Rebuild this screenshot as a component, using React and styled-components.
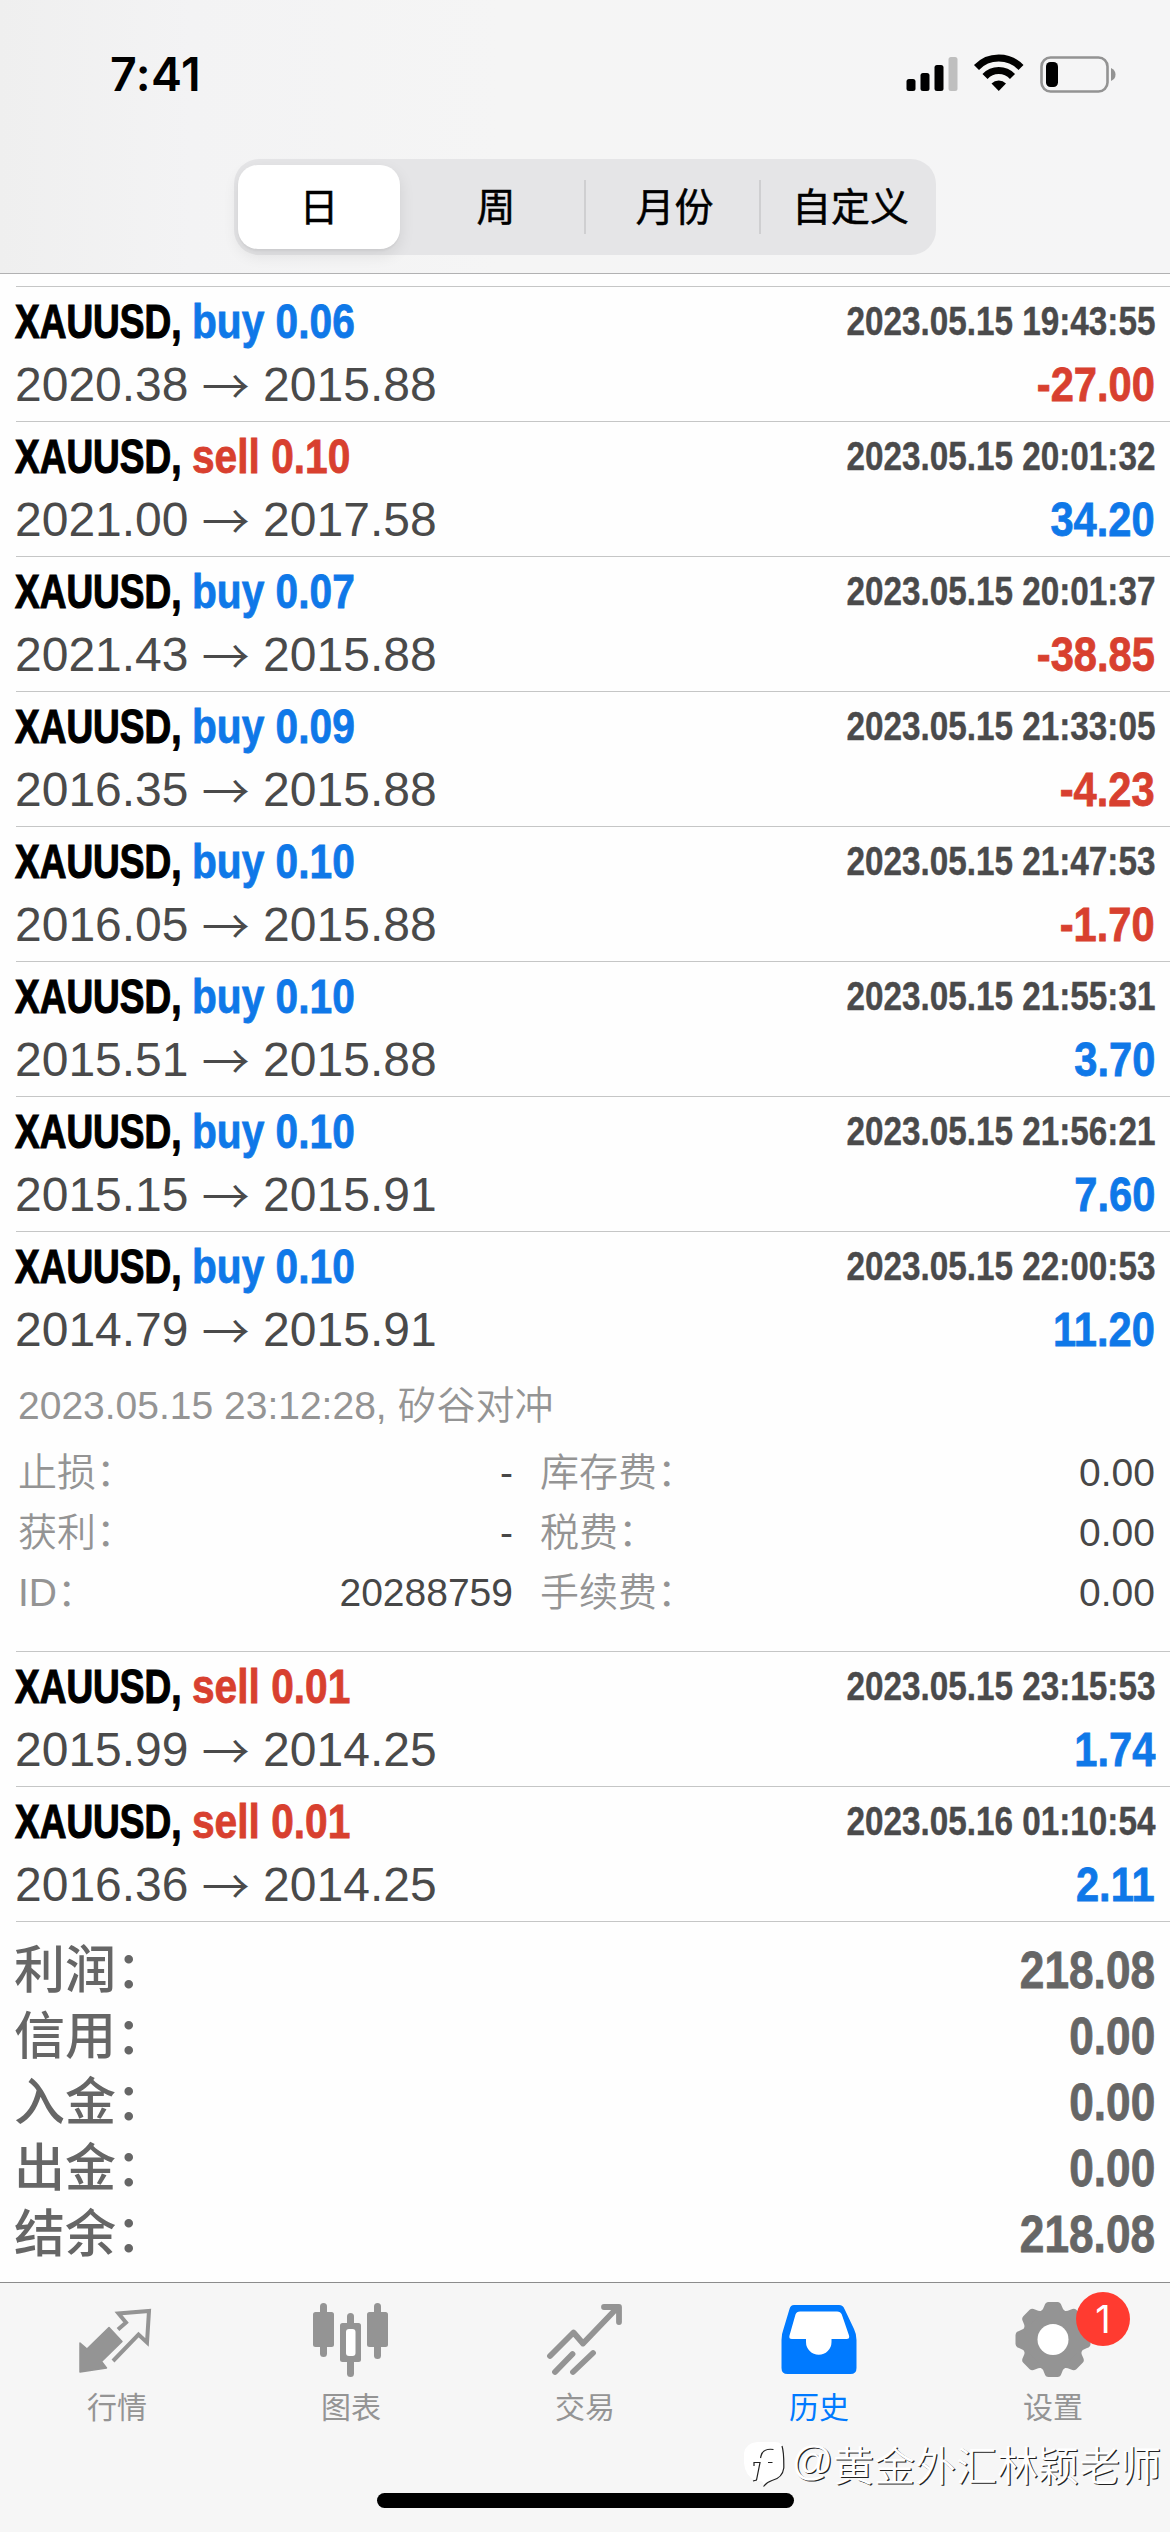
import React from "react";
import styled, { createGlobalStyle } from "styled-components";

const BLUE = "#0f78e8";
const RED = "#d8402f";

const GlobalStyle = createGlobalStyle`
  * { box-sizing: border-box; }
  html, body { margin: 0; padding: 0; background: #fff; }
  body { font-family: "Liberation Sans", "Noto Sans CJK SC", sans-serif; }
`;

const Screen = styled.div`
  position: relative;
  width: 1170px;
  height: 2532px;
  display: flex;
  flex-direction: column;
  overflow: hidden;
  background: #fefefe;
`;

const Header = styled.header`
  height: 274px;
  display: flex;
  flex-direction: column;
  align-items: center;
  background: linear-gradient(90deg, #efefef 0, #f3f3f4 190px, #f5f5f5 500px, #f5f5f6 100%);
  border-bottom: 1px solid #b1b1b2;
`;

const StatusBar = styled.div`
  width: 100%;
  height: 159px;
  padding: 46px 54px 0 110px;
  display: flex;
  justify-content: space-between;
  align-items: flex-start;
`;

const Clock = styled.span`
  font: 600 46.5px/56px Inter, sans-serif;
  letter-spacing: 0.5px;
  color: #000;
`;

const StatusIcons = styled.svg`
  width: 212px;
  height: 44px;
  margin-top: 6px;
`;

const Segments = styled.nav`
  width: 702px;
  height: 96px;
  display: grid;
  grid-template-columns: 170px 182px 175px 175px;
  align-items: center;
  background: #e5e5e7;
  border-radius: 25px;
`;

const Segment = styled.button`
  height: ${(p) => (p.$active ? "84px" : "54px")};
  margin: ${(p) => (p.$active ? "0 4px" : "0")};
  padding: ${(p) => (p.$active ? "0 0 5px" : "0 0 5px 4px")};
  border: 0;
  border-right: ${(p) => (p.$divided ? "2px solid #cfcfd1" : "0")};
  border-radius: ${(p) => (p.$active ? "20px" : "0")};
  background: ${(p) => (p.$active ? "#fff" : "transparent")};
  box-shadow: ${(p) => (p.$active ? "0 6px 16px rgba(0,0,0,.09), 0 2px 2px rgba(0,0,0,.04)" : "none")};
  font: 400 39px/49px "Noto Sans CJK SC", sans-serif;
  -webkit-text-stroke: 0.5px #000;
  color: #000;
`;

const List = styled.main`
  flex: 1;
  padding: 12px 0 0 16px;
`;

const Deal = styled.article`
  height: ${(p) => (p.$open ? "420px" : "135px")};
  padding: 4px 15px 0 0;
  border-top: 1px solid #c5c6c6;
`;

const Line = styled.div`
  height: ${(p) => p.$h}px;
  margin-left: -1px;
  display: flex;
  align-items: center;
  justify-content: space-between;
  white-space: nowrap;
`;

const Title = styled.div`
  display: flex;
  font-weight: 700;
  font-size: 49px;
  line-height: 60px;
`;

const Symbol = styled.span`
  width: 177px;
  color: #000;
  transform: scaleX(0.755);
  transform-origin: left;
  -webkit-text-stroke: 1.2px #000;
`;

const Side = styled.span`
  color: ${(p) => (p.$sell ? RED : BLUE)};
  transform: scaleX(0.83);
  transform-origin: left;
  -webkit-text-stroke: 0.8px currentColor;
`;

const Time = styled.time`
  padding-bottom: 1px;
  font-weight: 700;
  font-size: 40px;
  line-height: 58px;
  color: #4a4a4b;
  transform: scaleX(0.832);
  transform-origin: right;
  -webkit-text-stroke: 0.4px currentColor;
`;

const Prices = styled.span`
  padding-top: 1px;
  display: flex;
  font-size: 48px;
  line-height: 66px;
  color: #4a4a4a;
`;

const Arrow = styled.span`
  width: 48px;
  height: 60px;
  margin: 0 13.3px;
  font-family: "Noto Sans CJK SC", sans-serif;
  font-weight: 350;
  line-height: 62px;
`;

const Profit = styled.strong`
  font-weight: 700;
  font-size: 49px;
  line-height: 66px;
  color: ${(p) => (p.$loss ? RED : BLUE)};
  transform: scaleX(0.85);
  transform-origin: right;
  -webkit-text-stroke: 0.8px currentColor;
`;

const Details = styled.div`
  padding: 14px 0 0 2px;
  font-size: 39px;
  line-height: 60px;
  font-weight: 350;
  color: #949494;
`;

const Note = styled.p`
  margin: 0 0 7px;
`;

const DetailGrid = styled.dl`
  margin: 0;
  display: grid;
  grid-template-columns: 495px 615px;
  column-gap: 27px;
`;

const Detail = styled.div`
  display: flex;
  justify-content: space-between;
`;

const Term = styled.dt``;

const Value = styled.dd`
  margin: 0;
  color: #474747;
`;

const Summary = styled.section`
  padding: 15px 15px 0 0;
  border-top: 1px solid #c5c6c6;
`;

const SummaryLabel = styled.span`
  margin: 2px 0 0 -1px;
  font-size: 51px;
  line-height: 66px;
  font-weight: 500;
  color: #666;
`;

const SummaryValue = styled.span`
  font-size: 52px;
  line-height: 66px;
  font-weight: 700;
  color: #666;
  transform: scaleX(0.85);
  transform-origin: right;
  -webkit-text-stroke: 0.8px currentColor;
`;

const Footer = styled.footer`
  height: 250px;
  display: flex;
  flex-direction: column;
  align-items: center;
  justify-content: space-between;
  background: #f6f6f6;
  border-top: 1px solid #8c8c8c;
`;

const Tabs = styled.nav`
  width: 100%;
  display: grid;
  grid-template-columns: repeat(5, 1fr);
`;

const Tab = styled.a`
  position: relative;
  display: flex;
  flex-direction: column;
  align-items: center;
  padding-top: 15px;
  color: ${(p) => (p.$active ? "#007aff" : "#949494")};
`;

const TabIcon = styled.svg`
  width: 90px;
  height: 84px;
`;

const TabLabel = styled.span`
  margin-top: 1px;
  font: 400 30px/44px "Noto Sans CJK SC", sans-serif;
`;

const Badge = styled.span`
  position: absolute;
  top: 9px;
  left: 140px;
  width: 54px;
  height: 54px;
  border-radius: 50%;
  background: #ff3b30;
  color: #fff;
  text-align: center;
  font: 400 38px/54px Inter, sans-serif;
`;

const HomeIndicator = styled.div`
  width: 417px;
  height: 15px;
  margin-bottom: 24px;
  border-radius: 8px;
  background: #000;
`;

const Watermark = styled.div`
  position: absolute;
  right: 9px;
  bottom: 39px;
  display: flex;
  align-items: center;
  white-space: nowrap;
  color: #fff;
  font: 350 41px/60px "Noto Sans CJK SC", sans-serif;
  text-shadow: 1.3px 1.3px 0.6px #222;
`;

const At = styled.span`
  font-family: "Liberation Sans", sans-serif;
  line-height: 56px;
  padding-bottom: 4px;
`;

const WatermarkLogo = styled.svg`
  width: 46px;
  height: 50px;
  margin-right: 1px;
`;

const deals = [
  ["buy", "0.06", "2023.05.15 19:43:55", "2020.38", "2015.88", "-27.00"],
  ["sell", "0.10", "2023.05.15 20:01:32", "2021.00", "2017.58", "34.20"],
  ["buy", "0.07", "2023.05.15 20:01:37", "2021.43", "2015.88", "-38.85"],
  ["buy", "0.09", "2023.05.15 21:33:05", "2016.35", "2015.88", "-4.23"],
  ["buy", "0.10", "2023.05.15 21:47:53", "2016.05", "2015.88", "-1.70"],
  ["buy", "0.10", "2023.05.15 21:55:31", "2015.51", "2015.88", "3.70"],
  ["buy", "0.10", "2023.05.15 21:56:21", "2015.15", "2015.91", "7.60"],
  ["buy", "0.10", "2023.05.15 22:00:53", "2014.79", "2015.91", "11.20", true],
  ["sell", "0.01", "2023.05.15 23:15:53", "2015.99", "2014.25", "1.74"],
  ["sell", "0.01", "2023.05.16 01:10:54", "2016.36", "2014.25", "2.11"],
];

const details = [
  ["止损：", "-"],
  ["库存费：", "0.00"],
  ["获利：", "-"],
  ["税费：", "0.00"],
  ["ID：", "20288759"],
  ["手续费：", "0.00"],
];

const totals = [
  ["利润：", "218.08"],
  ["信用：", "0.00"],
  ["入金：", "0.00"],
  ["出金：", "0.00"],
  ["结余：", "218.08"],
];

const segments = ["日", "周", "月份", "自定义"];

const GEAR_TEETH = [0, 45, 90, 135, 180, 225, 270, 315];

const icons = {
  quotes: (
    <>
      <path
        d="M37 29.5 L50 43.5 L29.5 63.5 L34.5 70 L8 74 V45 L15 51Z"
        fill="currentColor"
        stroke="currentColor"
        strokeWidth="1.5"
        strokeLinejoin="round"
      />
      <path
        d="M46 31.5 L54 24.5 L46.5 15.5 L77 13 L75 44.5 L66.5 36.5 L41 63"
        fill="none"
        stroke="currentColor"
        strokeWidth="4"
      />
    </>
  ),
  chart: (
    <g fill="currentColor">
      <rect x="7" y="14" width="21" height="35" rx="2.5" />
      <rect x="14" y="5" width="7" height="54" rx="3.5" />
      <rect x="61" y="14" width="21" height="35" rx="2.5" />
      <rect x="68" y="5" width="7" height="56" rx="3.5" />
      <rect x="34" y="25" width="21" height="39" rx="2.5" />
      <rect x="41" y="15" width="7" height="64" rx="3.5" />
      <rect x="40" y="31" width="9.5" height="27" rx="3" fill="#fff" />
    </g>
  ),
  trade: (
    <path
      d="M10 58 L33.5 34.5 L43 45.5 L78 9 M64 9 H79 V24 M15 74 L32.5 56 M33 74 L53 55"
      fill="none"
      stroke="currentColor"
      strokeWidth="5.8"
      strokeLinejoin="round"
      strokeLinecap="round"
    />
  ),
  history: (
    <>
      <path
        d="M20 7 H65 Q69 7 70.5 11 L80 31 Q82.5 36 82.5 42 V70 Q82.5 76 76.5 76 H13.5 Q7.5 76 7.5 70 V42 Q7.5 36 9.5 31 L15.5 11 Q16.5 7 20 7Z"
        fill="currentColor"
      />
      <path
        d="M26 13.5 H63 Q66.5 13.5 67.8 16.5 L75 37.5 Q76 41 72.5 41 H57.5 V44 A12.7 12.7 0 0 1 32 44 V41 H18 Q14.5 41 15.5 37.5 L21.5 16.5 Q22.5 13.5 26 13.5Z"
        fill="#fff"
      />
    </>
  ),
  settings: (
    <g transform="translate(45 41.5)">
      <g fill="currentColor">
        <circle r="31" />
        {GEAR_TEETH.map((a) => (
          <path
            key={a}
            transform={`rotate(${a})`}
            d="M-13 -27 Q-9.500 -30 -8.500 -34 Q-7.500 -37.500 -4.500 -37.500 H4.500 Q7.500 -37.500 8.500 -34 Q9.500 -30 13 -27Z"
          />
        ))}
      </g>
      <circle r="15.5" fill="#fff" />
    </g>
  ),
};

const tabs = [
  ["quotes", "行情"],
  ["chart", "图表"],
  ["trade", "交易"],
  ["history", "历史"],
  ["settings", "设置"],
];

function StatusGlyphs() {
  return (
    <StatusIcons viewBox="0 0 212 44">
      <rect x="2.5" y="27" width="9" height="12" rx="2.5" />
      <rect x="16.5" y="21" width="9" height="18" rx="2.5" />
      <rect x="30.5" y="13" width="9" height="26" rx="2.5" />
      <rect x="44.5" y="5" width="9" height="34" rx="2.5" fill="#bfbfbf" />
      <g fill="none" stroke="#000">
        <path d="M72.5 15.5 A31 31 0 0 1 117 15.5" strokeWidth="7" />
        <path d="M81 24.5 A19 19 0 0 1 108.5 24.5" strokeWidth="7" />
      </g>
      <path d="M94.75 39 L87.5 31.5 A10.5 10.5 0 0 1 102 31.5Z" />
      <rect x="137.5" y="5.5" width="66" height="34" rx="9" fill="none" stroke="#939393" strokeWidth="2.6" />
      <rect x="142" y="10" width="12" height="25" rx="4.5" />
      <path d="M207 16 Q211.5 18 211.5 22.5 Q211.5 27 207 29Z" fill="#939393" />
    </StatusIcons>
  );
}

function DealDetails() {
  return (
    <Details>
      <Note>2023.05.15 23:12:28, 矽谷对冲</Note>
      <DetailGrid>
        {details.map(([label, value]) => (
          <Detail key={label}>
            <Term>{label}</Term>
            <Value>{value}</Value>
          </Detail>
        ))}
      </DetailGrid>
    </Details>
  );
}

export default function App() {
  return (
    <>
      <GlobalStyle />
      <Screen lang="zh-CN">
        <Header>
          <StatusBar>
            <Clock>7:41</Clock>
            <StatusGlyphs />
          </StatusBar>
          <Segments>
            {segments.map((s, i) => (
              <Segment key={s} $active={i === 0} $divided={i === 1 || i === 2}>
                {s}
              </Segment>
            ))}
          </Segments>
        </Header>

        <List>
          {deals.map(([side, lots, time, from, to, profit, open]) => (
            <Deal key={time} $open={open}>
              <Line $h={60}>
                <Title>
                  <Symbol>XAUUSD,</Symbol>
                  <Side $sell={side === "sell"}>
                    {side} {lots}
                  </Side>
                </Title>
                <Time>{time}</Time>
              </Line>
              <Line $h={66}>
                <Prices>
                  {from}
                  <Arrow>→</Arrow>
                  {to}
                </Prices>
                <Profit $loss={profit.startsWith("-")}>{profit}</Profit>
              </Line>
              {open && <DealDetails />}
            </Deal>
          ))}
          <Summary>
            {totals.map(([label, value]) => (
              <Line key={label} $h={66}>
                <SummaryLabel>{label}</SummaryLabel>
                <SummaryValue>{value}</SummaryValue>
              </Line>
            ))}
          </Summary>
        </List>

        <Footer>
          <Tabs>
            {tabs.map(([icon, label]) => (
              <Tab key={icon} $active={icon === "history"}>
                <TabIcon viewBox="0 0 90 84">{icons[icon]}</TabIcon>
                <TabLabel>{label}</TabLabel>
                {icon === "settings" && <Badge>1</Badge>}
              </Tab>
            ))}
          </Tabs>
          <HomeIndicator />
        </Footer>

        <Watermark>
          <WatermarkLogo viewBox="0 0 46 50">
            <path
              d="M13 4 H31 Q39 4 39.5 13 L40 30 Q39 41 28 42.5 Q23 44 19.5 49 Q20 44 17 43 L12 43 Q1 38 0 25 L0 15 Q2 5 13 4Z"
              fill="#fff"
            />
            <path
              d="M38 8 Q40 14 39.8 30 Q38.5 40 28 42.5 Q23 44 19.5 48.5 M29.5 11.5 Q19 10 17 18 L16.5 20 M10 28 V24.5 H16 L12.5 42 L9 43 M24 24.5 H28.5"
              fill="none"
              stroke="#222"
              strokeWidth="1.2"
            />
          </WatermarkLogo>
          <At>@</At>黄金外汇林颖老师
        </Watermark>
      </Screen>
    </>
  );
}
